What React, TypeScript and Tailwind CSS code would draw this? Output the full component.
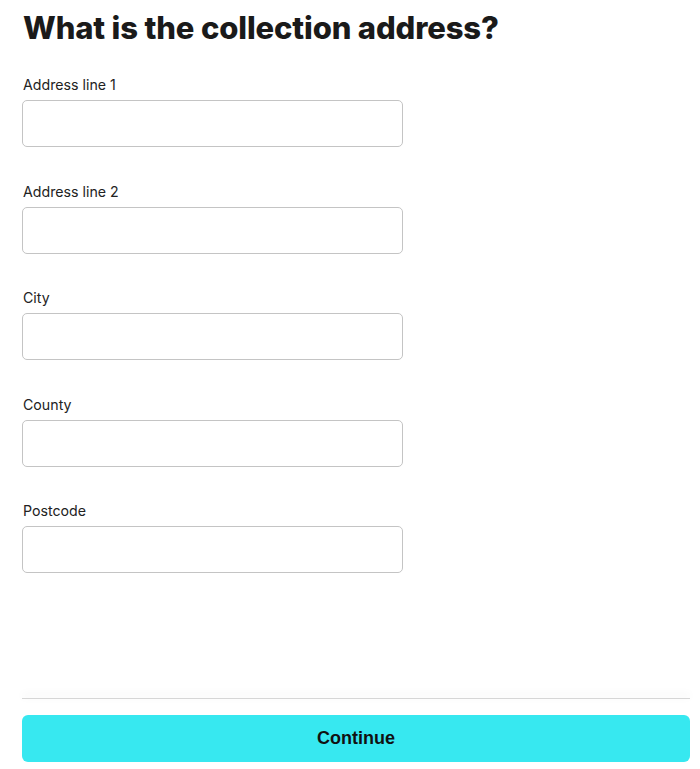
import React from "react";

const fields = ["Address line 1", "Address line 2", "City", "County", "Postcode"];

export default function App() {
  return (
    <div className="w-[700px] h-[769px] bg-white flex flex-col" style={{ fontFamily: "Inter, 'Noto Sans', sans-serif" }}>
      <div className="px-[23px] pt-[10px] flex-1">
        <h1 className="text-[31px] leading-[36px] font-extrabold text-[#1a1a1a] tracking-[-0.15px]">What is the collection address?</h1>
        <div className="mt-[29px] flex flex-col gap-[34.5px]">
          {fields.map((f) => (
            <div key={f} className="flex flex-col">
              <label className="text-[14.2px] leading-[20px] text-[#222] mb-[5px]">{f}</label>
              <input className="w-[381px] h-[47px] border border-[#c4c4c4] rounded-[5px] -ml-px px-3 outline-none" />
            </div>
          ))}
        </div>
      </div>
      <div className="pl-[22px] pr-[10px] pb-[7px]">
        <div className="h-px bg-[#d6d6d6] shadow-[0_-3px_8px_rgba(0,0,0,0.16)]" />
        <button className="mt-[16px] w-full h-[47px] rounded-[6px] bg-[#37e8f0] text-[18px] font-bold text-[#111]" style={{ fontFamily: "'Liberation Sans', Arial, sans-serif" }}>
          Continue
        </button>
      </div>
    </div>
  );
}
